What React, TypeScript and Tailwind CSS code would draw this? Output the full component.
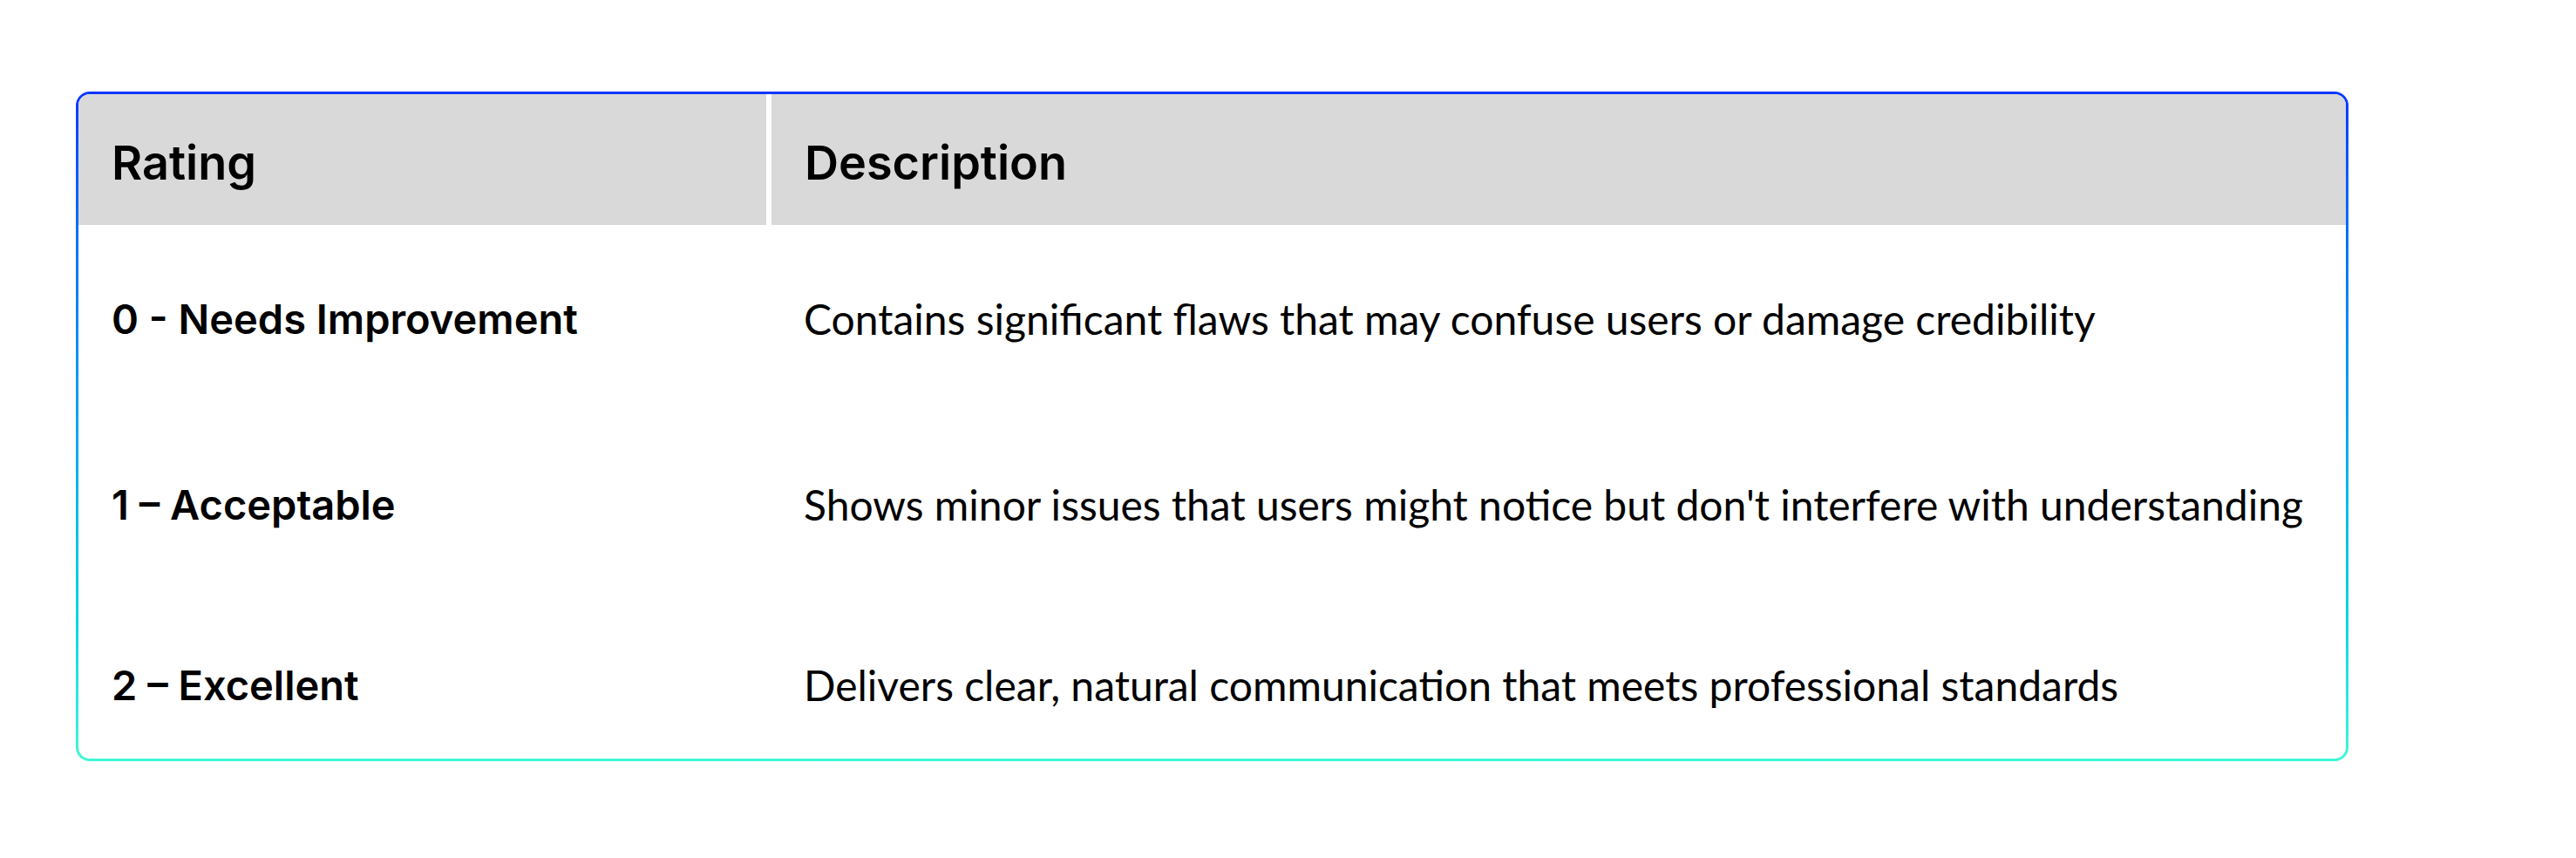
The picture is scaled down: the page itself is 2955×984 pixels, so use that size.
import React from 'react';

const rows = [
  { rating: '0 - Needs Improvement', text: 'Contains significant flaws that may confuse users or damage credibility', h: 'h-[216px]' },
  { rating: '1 – Acceptable', text: "Shows minor issues that users might notice but don't interfere with understanding", h: 'h-[210px]' },
  { rating: '2 – Excellent', text: 'Delivers clear, natural communication that meets professional standards', h: 'h-[186px] pt-[18px]' },
];

export default function App() {
  return (
    <div className="min-h-screen w-full bg-white pl-[87px] pt-[105px]">
      <div className="w-[2607px] rounded-[16px] bg-linear-to-b from-[#0a36ff] to-[#3ff7d5] p-[3px]">
        <div className="overflow-hidden rounded-[13px] bg-white text-black">
          {/* Header */}
          <div className="grid h-[150px] grid-cols-[789px_1fr] gap-x-[6px]">
            <div className="flex items-center bg-[#d9d9d9] pl-[38px] pt-[6px] font-['Inter',sans-serif] text-[54px] font-semibold">
              Rating
            </div>
            <div className="flex items-center bg-[#d9d9d9] pl-[38px] pt-[6px] font-['Inter',sans-serif] text-[54px] font-semibold">
              Description
            </div>
          </div>

          {rows.map((row) => (
            <div key={row.rating} className={`grid grid-cols-[789px_1fr] gap-x-[6px] ${row.h}`}>
              <div className="flex items-center pl-[38px] font-['Inter',sans-serif] text-[47px] font-semibold">
                {row.rating}
              </div>
              <div className="flex items-center pl-[37px] font-['Lato',sans-serif] text-[48px] font-normal">
                {row.text}
              </div>
            </div>
          ))}
        </div>
      </div>
    </div>
  );
}
